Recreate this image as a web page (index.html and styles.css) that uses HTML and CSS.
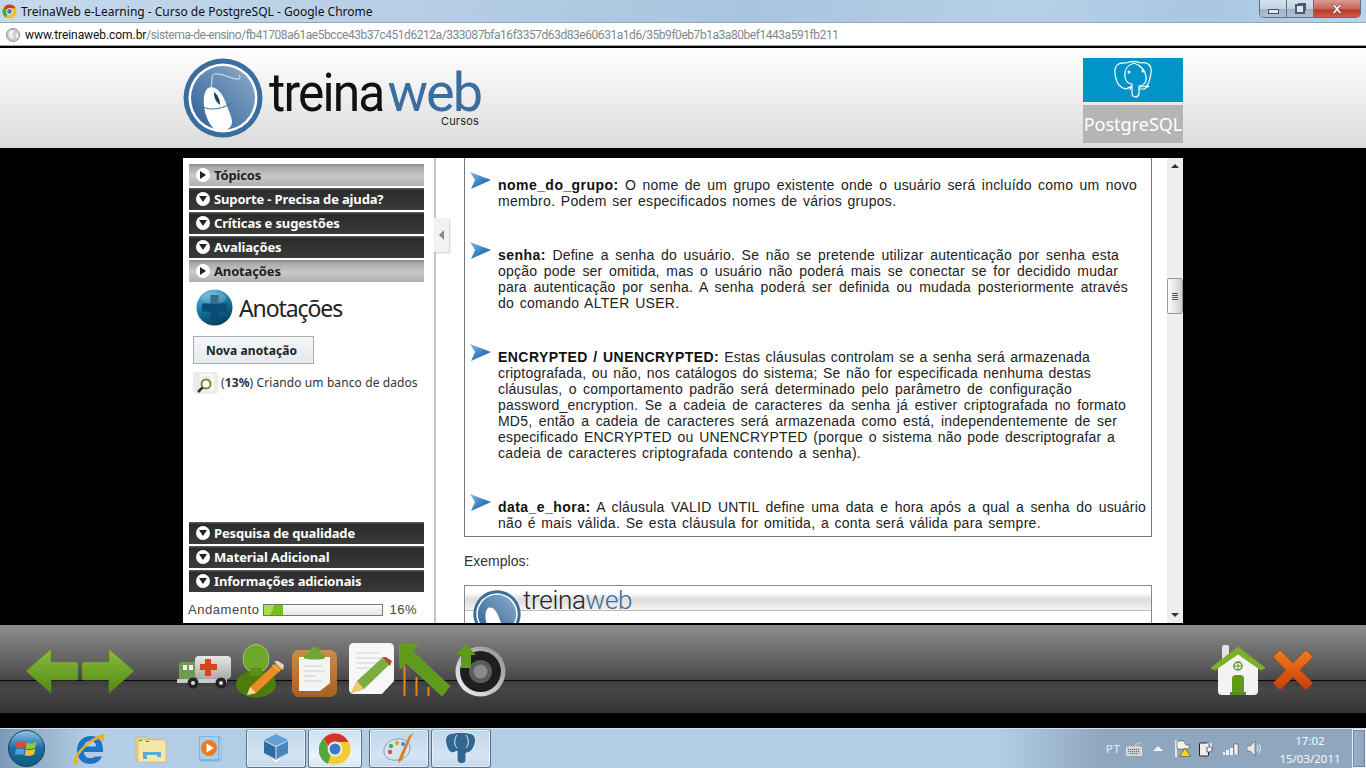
FILE: index.html
```html
<!DOCTYPE html>
<html lang="pt">
<head>
<meta charset="utf-8">
<title>TreinaWeb e-Learning - Curso de PostgreSQL - Google Chrome</title>
<link rel="stylesheet" href="styles.css">
</head>
<body>
<svg class="defs" aria-hidden="true">
  <defs>
    <linearGradient id="gGreen" x1="0" y1="0" x2="0" y2="1"><stop offset="0" stop-color="#8cbb3e"/><stop offset="1" stop-color="#4f8a12"/></linearGradient>
    <linearGradient id="gBall" x1="0.2" y1="0" x2="0.6" y2="1"><stop offset="0" stop-color="#6cc0e0"/><stop offset="0.5" stop-color="#14759f"/><stop offset="1" stop-color="#083c5c"/></linearGradient>
    <linearGradient id="gLogo" x1="1" y1="0" x2="0" y2="1"><stop offset="0" stop-color="#8fadca"/><stop offset="1" stop-color="#2a5f96"/></linearGradient>
    <linearGradient id="gOrange" x1="0" y1="0" x2="0" y2="1"><stop offset="0" stop-color="#f07d1e"/><stop offset="1" stop-color="#c93c08"/></linearGradient>
    <linearGradient id="gBrown" x1="0" y1="0" x2="0" y2="1"><stop offset="0" stop-color="#d28a49"/><stop offset="1" stop-color="#a75f22"/></linearGradient>
    <linearGradient id="gOrb" x1="0" y1="0" x2="0" y2="1"><stop offset="0" stop-color="#8fc6e8"/><stop offset="0.5" stop-color="#1d6a9e"/><stop offset="1" stop-color="#0d5c80"/></linearGradient>
    <linearGradient id="gSteel" x1="0" y1="0" x2="0" y2="1"><stop offset="0" stop-color="#e8e8e8"/><stop offset="1" stop-color="#a8a8a8"/></linearGradient>
    <linearGradient id="gRing" x1="1" y1="0" x2="0" y2="1"><stop offset="0" stop-color="#8c8c8c"/><stop offset="1" stop-color="#f4f4f4"/></linearGradient>
    <linearGradient id="gArrow" x1="0" y1="0" x2="1" y2="1"><stop offset="0" stop-color="#8dbbe4"/><stop offset="0.6" stop-color="#2f78bd"/><stop offset="1" stop-color="#1d5a9a"/></linearGradient>
    <g id="bulletArrow"><path d="M0 0 21 8 1 17 5 8Z" fill="url(#gArrow)"/></g>
  </defs>
</svg>

<div class="titlebar">
  <svg class="fav" viewBox="0 0 16 16"><circle cx="8" cy="8" r="7.5" fill="#e8c22c"/><path d="M8 .5A7.5 7.5 0 0 1 14.6 4.5H8A3.5 3.5 0 0 0 4.7 7L2.3 3.1A7.5 7.5 0 0 1 8 .5Z" fill="#d8352a"/><path d="M2.3 3.1 6 9.8 4.2 14.5A7.5 7.5 0 0 1 2.3 3.1Z" fill="#4da63c"/><circle cx="8" cy="8" r="3.4" fill="#fff"/><circle cx="8" cy="8" r="2.6" fill="#3f7fd0"/></svg>
  <span class="title-text">TreinaWeb e-Learning - Curso de PostgreSQL - Google Chrome</span>
  <div class="winbtns">
    <div class="winbtn wb-min"><span class="glyph-min"></span></div>
    <div class="winbtn wb-max"><span class="glyph-max"></span></div>
    <div class="winbtn wb-close">
      <svg width="12" height="10" viewBox="0 0 12 10"><path d="M1 0.5h2.6L6 3.2 8.400 .5H11L7.400 5 11 9.500H8.400L6 6.800 3.600 9.500H1L4.600 5Z" fill="#f4f4f4" stroke="#5a3030" stroke-width=".5"/></svg>
    </div>
  </div>
</div>

<div class="addressbar">
  <svg class="globe" viewBox="0 0 14 14"><circle cx="7" cy="7" r="6.500" fill="#c9cdd1" stroke="#8a8f94"/><path d="M3 3.500 6.500 2 8 4 6 6 7.500 8 6.500 11.500 4.500 9 2.500 7Z M9.500 6 12 5.500 12.500 8 10.500 10.500Z" fill="#f1f2f3"/></svg>
  <span class="url"><span class="url-host">www.treinaweb.com.br</span>/sistema-de-ensino/fb41708a61ae5bcce43b37c451d6212a/333087bfa16f3357d63d83e60631a1d6/35b9f0eb7b1a3a80bef1443a591fb211</span>
</div>

<header class="pagehead">
  <div class="pagehead-inner">
    <div class="brand">
      <svg class="brand-mark" viewBox="0 0 80 80">
        <circle cx="40" cy="40" r="39.500" fill="#3b6d9e"/>
        <circle cx="40" cy="40" r="34.500" fill="#fff"/>
        <circle cx="40" cy="40" r="32" fill="url(#gLogo)"/>
        <path d="M28 31C30 18 27 15 35 16 44 17 50 22 56 21 58 20 57 18 56 17" fill="none" stroke="#fff" stroke-width=".8"/>
        <path d="M25 30C32 27 39 33 44 48 48 59 53 66 44 72 36 76 29 72 24 60 20 50 19 35 25 30Z" fill="#fff"/>
        <path d="M31 34C35 37 37 42 37 47 33 44 31 40 31 34Z" fill="#1f3f63"/>
        <path d="M20 49C28 53 40 51 50 44" fill="none" stroke="#3b6d9e" stroke-width="1"/>
      </svg>
      <div class="brand-text">
        <div class="brand-name"><span class="brand-treina">treina</span><span class="brand-web">web</span></div>
        <div class="brand-sub">Cursos</div>
      </div>
    </div>
    <div class="course-tile">
      <div class="tile-top">
        <svg class="tile-elephant" width="40" height="40" viewBox="0 0 40 40" fill="none" stroke="#fff" stroke-width="1.200"><path d="M13 3C5 2 1 6 2 14 3 22 7 28 13 29L19 26"/><path d="M13 3C18 1 24 1 28 3 36 1 39 7 38 13 37 20 35 26 32 27"/><path d="M21 3C15 5 11 10 12 17 13 22 15 24 19 24V33C19 38 25 38 26 34V26C31 26 34 22 33 16 32 10 27 5 21 3Z"/><path d="M26 27 36 26 31 29H26"/><path d="M13 29 18 27 17 30"/><circle cx="16" cy="12" r=".9" fill="#fff"/><circle cx="30" cy="11" r=".9" fill="#fff"/></svg>
      </div>
      <div class="tile-bottom">PostgreSQL</div>
    </div>
  </div>
</header>

<div class="stage">
  <div class="app">
    <aside class="sidebar">
      <div class="acc acc-light"><span class="bullet"><span class="tri-right"></span></span>Tópicos</div>
      <div class="acc acc-dark"><span class="bullet"><span class="tri-down"></span></span>Suporte - Precisa de ajuda?</div>
      <div class="acc acc-dark"><span class="bullet"><span class="tri-down"></span></span>Críticas e sugestões</div>
      <div class="acc acc-dark"><span class="bullet"><span class="tri-down"></span></span>Avaliações</div>
      <div class="acc acc-light"><span class="bullet"><span class="tri-right"></span></span>Anotações</div>
      <div class="notes">
        <div class="notes-head">
          <svg width="37" height="37" viewBox="0 0 37 37"><circle cx="18.500" cy="18.500" r="18" fill="url(#gBall)"/><path d="M14.500 6h8v8.500H31v8h-8.500V31h-8v-8.500H6v-8h8.500Z" fill="#0b4c72"/><ellipse cx="18" cy="9" rx="12" ry="6" fill="#fff" opacity=".18"/></svg>
          <h2 class="notes-title">Anotações</h2>
        </div>
        <button class="btn-new">Nova anotação</button>
        <div class="note-row">
          <svg class="note-ico" width="25" height="22" viewBox="0 0 25 22"><rect x="0" y="0" width="25" height="22" rx="3" fill="#ececec"/><rect x="7" y="2" width="14" height="17" fill="#f8f8f8"/><path d="M9 5h9M9 7h9" stroke="#ddd"/><circle cx="13" cy="12" r="4.500" fill="#fff" stroke="#5f9a24" stroke-width="2"/><path d="M9.500 15.500 5 20" stroke="#333" stroke-width="2.500"/></svg>
          <span class="note-text">(<b>13%</b>) Criando um banco de dados</span>
        </div>
      </div>
      <div class="acc acc-dark"><span class="bullet"><span class="tri-down"></span></span>Pesquisa de qualidade</div>
      <div class="acc acc-dark"><span class="bullet"><span class="tri-down"></span></span>Material Adicional</div>
      <div class="acc acc-dark"><span class="bullet"><span class="tri-down"></span></span>Informações adicionais</div>
      <div class="progress">
        <span class="progress-label">Andamento</span>
        <span class="progress-bar"><span class="progress-fill"></span></span>
        <span class="progress-num">16%</span>
      </div>
    </aside>
    <div class="collapse-tab"><span class="tri-left"></span></div>

    <main class="scroller">
      <div class="content">
        <section class="panel">
          <div class="item">
            <svg class="arrow" viewBox="0 0 21 17"><use href="#bulletArrow"/></svg>
            <p class="para">
              <span class="ln w639"><b>nome_do_grupo:</b> O nome de um grupo existente onde o usuário será incluído como um novo</span>
              <span class="ln">membro. Podem ser especificados nomes de vários grupos.</span>
            </p>
          </div>
          <div class="item">
            <svg class="arrow" viewBox="0 0 21 17"><use href="#bulletArrow"/></svg>
            <p class="para">
              <span class="ln w621"><b>senha:</b> Define a senha do usuário. Se não se pretende utilizar autenticação por senha esta</span>
              <span class="ln w620">opção pode ser omitida, mas o usuário não poderá mais se conectar se for decidido mudar</span>
              <span class="ln w630">para autenticação por senha. A senha poderá ser definida ou mudada posteriormente através</span>
              <span class="ln">do comando ALTER USER.</span>
            </p>
          </div>
          <div class="item">
            <svg class="arrow" viewBox="0 0 21 17"><use href="#bulletArrow"/></svg>
            <p class="para">
              <span class="ln w592"><b>ENCRYPTED / UNENCRYPTED:</b> Estas cláusulas controlam se a senha será armazenada</span>
              <span class="ln w593">criptografada, ou não, nos catálogos do sistema; Se não for especificada nenhuma destas</span>
              <span class="ln w574">cláusulas, o comportamento padrão será determinado pelo parâmetro de configuração</span>
              <span class="ln w628">password_encryption. Se a cadeia de caracteres da senha já estiver criptografada no formato</span>
              <span class="ln w619">MD5, então a cadeia de caracteres será armazenada como está, independentemente de ser</span>
              <span class="ln w617">especificado ENCRYPTED ou UNENCRYPTED (porque o sistema não pode descriptografar a</span>
              <span class="ln">cadeia de caracteres criptografada contendo a senha).</span>
            </p>
          </div>
          <div class="item">
            <svg class="arrow" viewBox="0 0 21 17"><use href="#bulletArrow"/></svg>
            <p class="para">
              <span class="ln w648"><b>data_e_hora:</b> A cláusula VALID UNTIL define uma data e hora após a qual a senha do usuário</span>
              <span class="ln">não é mais válida. Se esta cláusula for omitida, a conta será válida para sempre.</span>
            </p>
          </div>
        </section>
        <p class="examples">Exemplos:</p>
        <section class="shot">
          <div class="shot-band"></div>
          <svg class="shot-mark" viewBox="0 0 80 80"><circle cx="40" cy="40" r="39.500" fill="#3b6d9e"/><circle cx="40" cy="40" r="34.500" fill="#fff"/><circle cx="40" cy="40" r="32" fill="url(#gLogo)"/><path d="M25 30C32 27 39 33 44 48 48 59 53 66 44 72 36 76 29 72 24 60 20 50 19 35 25 30Z" fill="#fff"/></svg>
          <div class="shot-name">treina<span class="shot-web">web</span></div>
        </section>
      </div>
      <div class="scrollbar">
        <div class="sb-up"><span class="tri-up"></span></div>
        <div class="sb-thumb"><span class="grip"></span></div>
        <div class="sb-rest"></div>
        <div class="sb-down"><span class="tri-dn"></span></div>
      </div>
    </main>
  </div>
</div>

<nav class="toolbar">
  <div class="tools">
    <svg class="t-arrow" width="52" height="44" viewBox="0 0 52 44"><path d="M0 22 25 0V13H50Q52 13 52 15V29Q52 31 50 31H25V44Z" fill="url(#gGreen)" stroke="#5b8f1d" stroke-width=".5"/></svg>
    <svg class="t-arrow t-next" width="52" height="44" viewBox="0 0 52 44"><path d="M52 22 27 0V13H2Q0 13 0 15V29Q0 31 2 31H27V44Z" fill="url(#gGreen)" stroke="#5b8f1d" stroke-width=".5"/></svg>
    <svg class="t-amb" width="54" height="34" viewBox="0 0 54 34"><rect x="18" y="1" width="36" height="23" rx="4" fill="url(#gSteel)"/><rect x="28" y="4" width="6" height="17" fill="#d8431a"/><rect x="23" y="9" width="17" height="6" fill="#d8431a"/><path d="M2 9Q2 7 5 7H18V26H2Z" fill="#6e9a52"/><rect x="6" y="10" width="4" height="5" fill="#eef4e6"/><rect x="12" y="10" width="4" height="5" fill="#eef4e6"/><rect x="0" y="24" width="50" height="4" fill="#c9c9c9"/><circle cx="16" cy="28" r="5.500" fill="#222"/><circle cx="16" cy="28" r="2" fill="#ddd"/><circle cx="44" cy="28" r="5.500" fill="#222"/><circle cx="44" cy="28" r="2" fill="#ddd"/></svg>
    <svg class="t-person" width="48" height="54" viewBox="0 0 48 54"><ellipse cx="20" cy="15" rx="13" ry="14.500" fill="#6ea52a" stroke="#9ccb58"/><ellipse cx="20" cy="40" rx="20" ry="13.500" fill="#4c7c0c"/><path d="M14 24h12v8H14Z" fill="#5b8f1a"/><path d="M40 19 47 24 20 49 11 51 14 43Z" fill="#ee8a22"/><path d="M36 21 44 27" stroke="#e9c9a0" stroke-width="1"/><path d="M38 17 42 17 48 21 47 26Z" fill="#e3d9c8"/><path d="M14 43 20 49 11 51Z" fill="#f5d9a0"/></svg>
    <svg class="t-clip" width="45" height="54" viewBox="0 0 45 54"><rect x="0" y="6" width="45" height="47" rx="7" fill="url(#gBrown)"/><path d="M7 13H38V39L28 47H7Z" fill="#f4f4f2"/><path d="M12 22H30M12 27H33M12 32H24M12 37H31" stroke="#cfcfcf"/><path d="M12 14C12 9 17 9 18 8 19 1 27 1 28 8 29 9 33 9 33 14 33 16 12 16 12 14Z" fill="#6fa535"/></svg>
    <svg class="t-note" width="45" height="52" viewBox="0 0 45 52"><path d="M5 0H40Q45 0 45 5V38L33 51H5Q0 51 0 46V5Q0 0 5 0Z" fill="#f7f7f7"/><path d="M7 10H30M7 15H36M7 20H28M7 25H24" stroke="#d2d2d2"/><path d="M33 15 41 21 15 46 2 50 8 38Z" fill="#7cae3f"/><path d="M33 14 37 14 43 18 41 23Z" fill="#a9532c"/><path d="M8 38 15 46 2 50Z" fill="#f3c76a"/></svg>
    <svg class="t-up" width="52" height="53" viewBox="0 0 52 53"><path d="M0 0H19L13 7 51 42 43 52 7 19 1 25Z" fill="#5f9a1c" stroke="#7eb53a" stroke-width=".5"/><path d="M5.500 22V52M17.500 33V52M29.500 43V52" stroke="#e8851f" stroke-width="2"/></svg>
    <svg class="t-spk" width="51" height="53" viewBox="0 0 51 53"><circle cx="25.500" cy="27.500" r="25" fill="url(#gRing)"/><circle cx="25.500" cy="27.500" r="20.500" fill="#1e1e1e"/><circle cx="25.500" cy="27.500" r="11.500" fill="#5c5c5c"/><circle cx="25.500" cy="27.500" r="7" fill="#8a8a8a"/><path d="M11 0 21 11H16V24H6V11H1Z" fill="#5f9a1c"/></svg>
  </div>
  <div class="tools-right">
    <svg class="t-home" width="54" height="52" viewBox="0 0 54 52"><rect x="11" y="0" width="7" height="16" rx="2" fill="#e2e2e2"/><path d="M7 21 27 6 47 21V46Q47 50 43 50H11Q7 50 7 46Z" fill="#f3f3f3"/><path d="M0 23 27 2 54 23 50 25 27 9 4 25Z" fill="#7ab02c" stroke="#7ab02c"/><circle cx="27" cy="21" r="4" fill="#fff" stroke="#5f8f24" stroke-width="1.500"/><path d="M27 17v8M23 21h8" stroke="#5f8f24"/><path d="M21 49V34Q21 30 25 30H29Q33 30 33 34V49Z" fill="#5e9a12"/><rect x="19" y="47" width="16" height="3" fill="#5e8a22"/></svg>
    <svg class="t-x" width="40" height="40" viewBox="0 0 40 40"><path d="M8 1 20 13 32 1Q33 0 34 1L39 6Q40 7 39 8L27 20 39 32Q40 33 39 34L34 39Q33 40 32 39L20 27 8 39Q7 40 6 39L1 34Q0 33 1 32L13 20 1 8Q0 7 1 6L6 1Q7 0 8 1Z" fill="url(#gOrange)" stroke="#b8390c" stroke-width=".7"/></svg>
  </div>
</nav>
<div class="gutter"></div>

<footer class="taskbar">
  <div class="pins">
    <svg class="orb" width="37" height="37" viewBox="0 0 38 38"><circle cx="19" cy="19" r="18.500" fill="url(#gOrb)" stroke="#14425f"/><path d="M9 13Q13 11 18 13L17 19Q12 17 8 19Z" fill="#e2492a"/><path d="M19 13Q24 15 29 12L28 18Q23 21 18 19Z" fill="#8cc63f"/><path d="M8 20Q12 18 17 20L16 26Q11 24 7 26Z" fill="#4aa3df"/><path d="M18 20Q23 22 28 19L27 25Q22 28 17 26Z" fill="#f6c026"/></svg>
    <svg class="pin-ie" width="32" height="32" viewBox="0 0 32 32"><path d="M22 23.500H29C27 28 23 31 17 31 9 31 4 25 4 17 4 9 10 3 18 3 26 3 30 9 30 17V19H11C11 23 14 25 17 25 19 25 21 24.500 22 23.500ZM11 13.500H23C23 10 21 8 17 8 14 8 11.500 10 11 13.500Z" fill="#1d74c4"/><path d="M1 31C-2 26 12 6 30 1 33 0 32 5 29 10 30 3 22 6 14 13 7 19 2 27 5 30 4 31 2 32 1 31Z" fill="#e9b31f"/></svg>
    <svg class="pin-folder" width="32" height="28" viewBox="0 0 32 28"><path d="M1 2H11L13 4H25V25H1Z" fill="#e9cf86" stroke="#c8a95a" stroke-width=".5"/><path d="M5 5H29L31 8V27H3V8Z" fill="#f8e6a8" stroke="#c8a95a" stroke-width=".5"/><path d="M4 5h3v1H4Z" fill="#40a040"/><path d="M11 6h3v1h-3Z" fill="#d04030"/><path d="M8 22V17H26V22H22V20H12V24H8Z" fill="#5aaad8"/></svg>
    <svg class="pin-wmp" width="27" height="26" viewBox="0 0 27 26"><path d="M3 2H22V25H3Z" fill="#d3e7f6" stroke="#7fb2d8"/><path d="M0 0H20V24H0Z" fill="#a7d0ec" stroke="#5b9ccc"/><circle cx="10" cy="12" r="8" fill="#ee7a1e"/><path d="M7.500 7.500 15 12 7.500 16.500Z" fill="#fff"/></svg>
    <div class="task task-vbox">
      <svg width="26" height="32" viewBox="0 0 26 32"><path d="M13 1 25 7 13 13 1 7Z" fill="#5fa3d9"/><path d="M1 8 12.500 14V26L1 20Z" fill="#2f6aa5"/><path d="M25 8 13.500 14V26L25 20Z" fill="#4787be"/><path d="M1 20 13 31 25 20 13 27Z" fill="#f4f6f8" stroke="#8aa" stroke-width=".5"/></svg>
    </div>
    <div class="task task-chrome">
      <svg width="32" height="32" viewBox="0 0 32 32"><circle cx="16" cy="16" r="15.500" fill="#f0cc35"/><path d="M16 .5A15.500 15.500 0 0 1 29.500 9H16A7 7 0 0 0 9.500 13.500L4.500 5.500A15.500 15.500 0 0 1 16 .5Z" fill="#d8352a"/><path d="M4.500 5.500 12 19.500 9 31A15.500 15.500 0 0 1 4.500 5.500Z" fill="#4fa73e"/><circle cx="16" cy="16" r="7.500" fill="#eee"/><circle cx="16" cy="16" r="5.500" fill="#3d78cc"/></svg>
    </div>
    <div class="task task-paint">
      <svg width="32" height="32" viewBox="0 0 32 32"><path d="M13 6C5 7 0 14 1 20 2 26 9 28 15 27 21 26 27 22 27 15 27 9 21 5 13 6Z" fill="#d5e4f1" stroke="#7e9fba"/><circle cx="7" cy="19" r="2.200" fill="#e05050"/><circle cx="8" cy="13" r="2.200" fill="#58a84c"/><circle cx="14" cy="10" r="2.200" fill="#e8a030"/><circle cx="20" cy="11" r="2" fill="#4a8ad0"/><path d="M31 0 28 4 19 27 15 30 16 25 26 3Z" fill="#e07f1e"/></svg>
    </div>
    <div class="task task-pg">
      <svg width="32" height="34" viewBox="0 0 32 34"><path d="M9 1C2 1-1 6 1 12 2 17 5 21 8 21L12 19V27C12 33 21 33 21 28V21C25 21 28 18 30 12 32 6 29 1 23 1 20 0 12 0 9 1Z" fill="#336791" stroke="#e4eef6"/><path d="M12 3C9 7 9 13 12 16M21 3C24 7 24 13 21 16" fill="none" stroke="#e4eef6"/></svg>
    </div>
  </div>
  <div class="tray">
    <span class="tray-lang">PT</span>
    <svg class="tr-kb" width="16" height="14" viewBox="0 0 16 14"><path d="M9 4C9 1 12 3 15 0" fill="none" stroke="#d8dde2"/><rect x="0.500" y="5" width="15" height="9" rx="1" fill="#c8ccd0" stroke="#e8e8e8"/><path d="M2 7.500h12M2 9.500h12M4 11.500h8" stroke="#666" stroke-dasharray="1 1"/></svg>
    <span class="tr-up"></span>
    <svg class="tr-flag" width="16" height="17" viewBox="0 0 16 17"><path d="M1 0V17" stroke="#fff" stroke-width="1.500"/><path d="M2 1H9L11 5 15 5 13 9H2Z" fill="#f2f2f2" stroke="#333" stroke-width=".5"/><path d="M10 8 15.500 16.500H4.500Z" fill="#f7d320" stroke="#333" stroke-width=".5"/></svg>
    <svg class="tr-plug" width="15" height="16" viewBox="0 0 15 16"><rect x="0.500" y="2" width="9" height="13" rx="1" fill="#eee" stroke="#222"/><path d="M8 6H13V9Q13 11 10 11H8Z" fill="#fff" stroke="#222" stroke-width=".7"/><path d="M9 2V6M12 2V6" stroke="#fff" stroke-width="1.200"/></svg>
    <svg class="tr-sig" width="16" height="12" viewBox="0 0 16 12"><rect x="0" y="9" width="2" height="3" fill="#f2f2f2"/><rect x="3" y="7" width="3" height="5" fill="#f2f2f2"/><rect x="7" y="5" width="3" height="7" fill="#f2f2f2"/><rect x="11" y="1" width="4" height="11" fill="#f2f2f2" stroke="#444" stroke-width=".5"/></svg>
    <svg class="tr-vol" width="15" height="15" viewBox="0 0 15 15"><path d="M0 5H3L8 0V15L3 10H0Z" fill="#e8e8e8" stroke="#444" stroke-width=".5"/><path d="M10 4.500Q12 7.500 10 10.500M12 2.500Q15 7.500 12 12.500" fill="none" stroke="#f2f2f2"/></svg>
    <div class="clock"><span>17:02</span><span>15/03/2011</span></div>
  </div>
  <div class="show-desktop"></div>
</footer>
</body>
</html>
```
FILE: styles.css
```css
* { box-sizing: border-box; }
html, body { margin: 0; padding: 0; }
body {
  width: 1366px;
  height: 768px;
  overflow: hidden;
  display: flex;
  flex-direction: column;
  background: #000;
  font-family: "Liberation Sans", Arial, sans-serif;
}
.defs { position: absolute; width: 0; height: 0; }

/* Window chrome */
.titlebar {
  height: 22px;
  display: flex;
  align-items: center;
  padding-left: 2px;
  background: linear-gradient(100deg, #c6d9ec 0%, #b6cee6 30%, #a9c4df 55%, #b7d0e9 75%, #a9c6e2 88%, #bcd3ea 100%);
  flex: none;
}
.fav { width: 15px; height: 15px; flex: none; }
.title-text {
  margin-left: 4px;
  font: 12px "Noto Sans", sans-serif;
  color: #111;
}
.winbtns {
  margin-left: auto;
  margin-right: 5px;
  align-self: flex-start;
  display: flex;
  height: 18px;
  border: 1px solid #5c6f85;
  border-top: 0;
  border-radius: 0 0 5px 5px;
  overflow: hidden;
}
.winbtn { display: flex; align-items: center; justify-content: center; }
.wb-min, .wb-max {
  width: 27px;
  background: linear-gradient(#d5e1ee 0%, #c3d3e4 50%, #9eb3ca 55%, #aec2d8 100%);
  border-right: 1px solid #5c6f85;
}
.wb-close { width: 46px; background: linear-gradient(#dd9b90 0%, #c8685a 50%, #b93a28 60%, #cf5c44 100%); }
.glyph-min { width: 11px; height: 5px; margin-top: 5px; background: #e4e8ec; border: 1px solid #44525f; }
.glyph-max { width: 10px; height: 10px; background: #dfe6ee; border: 2px solid #4b5a69; box-shadow: 2px -2px 0 -1px #4b5a69; }

.addressbar {
  height: 26px;
  display: flex;
  align-items: center;
  padding-left: 6px;
  background: #fff;
  border-top: 1px solid #99a5b2;
  border-bottom: 2px solid #000;
  box-shadow: inset 0 -1px 0 #a9a9b0;
  flex: none;
}
.globe { width: 14px; height: 14px; flex: none; }
.url { margin-left: 5px; font: 12px Roboto, sans-serif; letter-spacing: -.45px; color: #7d8a8a; white-space: nowrap; }
.url-host { color: #111; letter-spacing: -.07px; }

/* Header */
.pagehead {
  height: 100px;
  flex: none;
  background: linear-gradient(#fff 0%, #dcdcdc 100%);
}
.pagehead-inner {
  width: 1000px;
  height: 100%;
  margin: 0 auto;
  display: flex;
  justify-content: space-between;
  padding-top: 10px;
}
.brand { display: flex; align-items: flex-start; }
.brand-mark { width: 80px; height: 80px; flex: none; }
.brand-text { margin-left: 4px; width: 214px; display: flex; flex-direction: column; align-items: flex-end; }
.brand-name {
  margin-top: 13px;
  font: 400 54px/44px Roboto, sans-serif;
  letter-spacing: -2px;
  color: #111;
  white-space: nowrap;
}
.brand-treina { display: inline-block; transform: translateX(6px) scaleX(.92); transform-origin: left center; }
.brand-web { color: #3b6d9e; }
.brand-sub { margin-right: 2px; font: 11px/12px Inter, sans-serif; letter-spacing: .2px; color: #222; }
.course-tile { width: 100px; }
.tile-top { height: 44px; background: #0094c8; display: flex; justify-content: center; align-items: center; }
.tile-bottom {
  height: 38px;
  margin-top: 3px;
  background: #b5b5b5;
  color: #fff;
  font: 18px/38px "Noto Sans", sans-serif;
  text-align: center;
  white-space: nowrap;
}

/* Stage */
.stage { height: 477px; flex: none; background: #000; padding-top: 10px; }
.app {
  position: relative;
  width: 1000px;
  height: 465px;
  margin: 0 auto;
  background: #fff;
  display: flex;
}
.sidebar {
  width: 253px;
  flex: none;
  padding: 6px 10px 0 6px;
  border-right: 2px solid #c4c4c4;
  display: flex;
  flex-direction: column;
  gap: 2px;
}
.acc {
  height: 22px;
  flex: none;
  width: 235px;
  display: flex;
  align-items: center;
  padding-left: 7px;
  font: 700 13px "Noto Sans", sans-serif;
  letter-spacing: -.15px;
}
.acc-dark { background: linear-gradient(#555 0, #555 1px, #2b2b2b 2px, #3a3a3a 100%); color: #fff; }
.acc-light { background: linear-gradient(#8a8a8a 0, #a8a8a8 3px, #c9c9c9 55%, #b0b0b0 100%); color: #222; }
.bullet {
  width: 14px;
  height: 14px;
  margin-right: 4px;
  border-radius: 50%;
  background: #fff;
  display: flex;
  align-items: center;
  justify-content: center;
  flex: none;
}
.tri-down { border: 4.500px solid transparent; border-top: 6px solid #222; border-bottom: 0; }
.tri-right { border: 4px solid transparent; border-left: 6px solid #222; border-right: 0; }
.notes { height: 236px; flex: none; display: flex; flex-direction: column; }
.notes-head { display: flex; align-items: center; height: 42px; padding: 5px 0 0 7px; }
.notes-title { margin: 0 0 0 6px; font: 400 23px/36px "Noto Sans", sans-serif; color: #222; letter-spacing: -1.1px; }
.btn-new {
  margin: 10px 0 0 4px;
  width: 121px;
  height: 28px;
  border: 1px solid #aaa;
  background: linear-gradient(#f4f7fa, #e3e9ee);
  font: 700 12px "Noto Sans", sans-serif;
  letter-spacing: .1px;
  color: #222;
  padding: 0 4px 0 0;
}
.note-row { display: flex; align-items: center; margin: 8px 0 0 4px; }
.note-ico { flex: none; }
.note-text { margin: -2px 0 0 3px; font: 12px "Noto Sans", sans-serif; letter-spacing: .1px; color: #333; white-space: nowrap; }
.progress {
  width: 240px;
  margin-left: -1px;
  margin-top: 8px;
  display: flex;
  align-items: center;
  font: 13px "Liberation Sans", sans-serif;
  color: #444;
}
.progress-label { letter-spacing: .55px; }
.progress-bar { width: 120px; height: 12px; margin-left: 4px; border: 1px solid #777; background: linear-gradient(#fafafa, #e6e6e6); display: block; }
.progress-fill { display: block; width: 19px; height: 100%; background: linear-gradient(115deg, #a7dd4a 0 45%, #74c214 45% 100%); }
.progress-num { margin-left: 6px; letter-spacing: .5px; }

.collapse-tab {
  position: absolute;
  left: 251px;
  top: 60px;
  width: 15px;
  height: 34px;
  background: #f2f2f2;
  box-shadow: 1px 1px 2px #ccc;
  display: flex;
  align-items: center;
  justify-content: center;
}
.tri-left { border: 5px solid transparent; border-right: 5px solid #888; border-left: 0; }

/* Content */
.scroller { flex: 1; display: flex; overflow: hidden; height: 465px; }
.content { width: 731px; padding-left: 28px; flex: none; }
.panel {
  width: 688px;
  border: 1px solid #777;
  border-top: 0;
  padding: 14px 0 5px 5px;
  display: flex;
  flex-direction: column;
  gap: 33px;
}
.item { display: flex; align-items: flex-start; }
.arrow { width: 21px; height: 17px; flex: none; margin-right: 7px; }
.para { margin: 5px 0 0; font-size: 14px; line-height: 16px; letter-spacing: .3px; word-spacing: 1.300px; color: #222; }
.para b { color: #111; letter-spacing: .45px; }
.ln { display: block; white-space: nowrap; }
.ln[class*=" w"] { white-space: normal; text-align: justify; text-align-last: justify; word-spacing: 0; letter-spacing: .2px; }
.w574 { width: 574px; } .w592 { width: 592px; } .w593 { width: 593px; }
.w617 { width: 617px; } .w619 { width: 619px; } .w620 { width: 620px; }
.w621 { width: 621px; } .w628 { width: 628px; } .w630 { width: 630px; }
.w639 { width: 639px; } .w648 { width: 648px; }
.examples { margin: 16px 0; font-size: 14px; line-height: 16px; color: #333; }
.shot { position: relative; width: 688px; height: 60px; border: 1px solid #888; overflow: hidden; background: #fff; }
.shot-band { height: 25px; border-bottom: 1px solid #bbb; background: linear-gradient(#fff 0, #fff 30%, #ddd 55%, #f4f4f4 100%); }
.shot-mark { position: absolute; left: 8px; top: 4px; width: 48px; height: 48px; }
.shot-name { position: absolute; left: 58px; top: 0; font: 300 26px/28px Roboto, sans-serif; color: #222; letter-spacing: -.3px; }
.shot-web { color: #3b6d9e; }

.scrollbar { width: 16px; flex: none; margin-left: auto; background: #eee; display: flex; flex-direction: column; }
.sb-up, .sb-down { height: 16px; display: flex; align-items: center; justify-content: center; flex: none; }
.tri-up { border: 4px solid transparent; border-bottom: 4px solid #333; border-top: 0; }
.tri-dn { border: 4px solid transparent; border-top: 4px solid #333; border-bottom: 0; }
.sb-thumb {
  height: 36px;
  margin-top: 104px;
  border: 1px solid #999;
  border-radius: 2px;
  background: linear-gradient(90deg, #fff, #ccc);
  display: flex;
  align-items: center;
  justify-content: center;
  flex: none;
}
.grip { width: 6px; height: 7px; background: repeating-linear-gradient(#555 0 1px, transparent 1px 2px); }
.sb-rest { flex: 1; }

/* Toolbar */
.toolbar {
  height: 88px;
  flex: none;
  display: flex;
  align-items: flex-start;
  background: linear-gradient(#8e8e8e 0, #7c7c7c 15%, #5d5d5d 45%, #474747 62%, #0a0a0a 62.500%, #0a0a0a 63.500%, #3c3c3c 64%, #484848 72%, #333 100%);
}
.tools { display: flex; align-items: flex-start; padding-left: 26px; }
.tools-right { display: flex; align-items: flex-start; margin-left: auto; margin-right: 53px; }
.t-arrow { margin-top: 24px; }
.t-next { margin-left: 4px; }
.t-amb { margin: 30px 0 0 43px; }
.t-person { margin: 19px 0 0 5px; }
.t-clip { margin: 19px 0 0 8px; }
.t-note { margin: 18px 0 0 12px; }
.t-up { margin: 19px 0 0 5px; }
.t-spk { margin: 19px 0 0 4px; }
.t-home { margin-top: 20px; }
.t-x { margin: 25px 0 0 8px; }
.gutter { height: 15px; flex: none; background: #000; }

/* Taskbar */
.taskbar {
  height: 40px;
  flex: none;
  display: flex;
  align-items: stretch;
  background: linear-gradient(90deg, #7b9ab8 0, #a3bdd6 60px, #b3cde7 90px, #b3cde7 1000px, #8fa6bf 1100px, #8fa6bf 100%);
  border-top: 1px solid #d0dfee;
}
.pins { display: flex; align-items: center; padding-left: 8px; }
.pin-ie { margin-left: 28px; }
.pin-folder { margin-left: 30px; }
.pin-wmp { margin-left: 32px; }
.task {
  width: 60px;
  height: 39px;
  border: 1px solid #5a7288;
  border-top-color: #8ba;
  border-radius: 3px;
  background: linear-gradient(#bfd6ea, #d5e5f3 70%, #c4d8eb);
  display: flex;
  align-items: center;
  justify-content: center;
  box-shadow: inset 0 0 0 1px rgba(255,255,255,.5);
}
.task-vbox { margin-left: 20px; }
.task-chrome { width: 54px; margin-left: 2px; background: linear-gradient(#cfe0f0, #eaf3fb 70%, #d6e5f2); }
.task-paint { margin-left: 7px; }
.task-pg { margin-left: 2px; }
.tray { margin-left: auto; display: flex; align-items: center; color: #f2f5f8; font: 12px "Noto Sans", sans-serif; }
.tray-lang { margin-right: 5px; font-size: 11.500px; letter-spacing: 1px; color: #e6edf3; }
.tr-kb { margin-right: 11px; }
.tr-up { width: 0; height: 0; border: 5px solid transparent; border-bottom: 5px solid #f2f5f8; border-top: 0; margin-right: 12px; }
.tr-flag { margin-right: 8px; }
.tr-plug { margin-right: 9px; }
.tr-sig { margin-right: 8px; }
.tr-vol { margin-right: 19px; }
.clock { width: 58px; margin: 2px 13px 0 0; display: flex; flex-direction: column; align-items: center; font-size: 11.500px; line-height: 18px; color: #f6f8fa; }
.show-desktop { width: 14px; flex: none; border: 1px solid #eef; background: linear-gradient(90deg, #9db5ca, #8aa3bc); box-shadow: inset 0 0 0 1px #6d879f; }
```
